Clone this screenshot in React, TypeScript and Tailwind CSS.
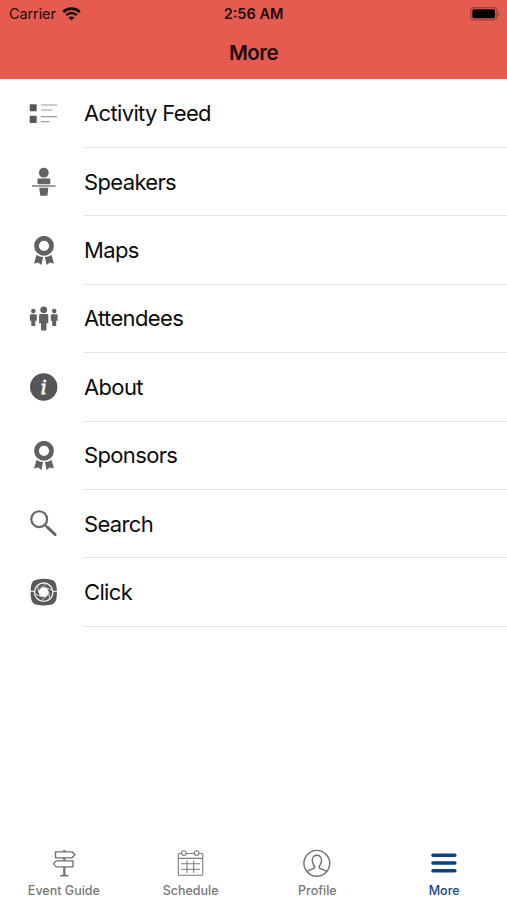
import React from "react";

interface MenuItem {
    label: string;
    icon: React.ReactNode;
}

interface TabItem extends MenuItem {
    active?: boolean;
}

const FeedIcon = () => (
    <svg width="30" height="30" viewBox="0 0 30 30" fill="#58585a">
        <rect x="0.7" y="5.2" width="7" height="7.1" rx="0.6" />
        <rect x="0.7" y="16.8" width="7" height="7.1" rx="0.6" />
        <path
            d="M12 6h16M12 11h11.5M12 17.600h16M12 22.600h8.500"
            stroke="#9a9a9c"
            strokeWidth="1.2"
        />
    </svg>
);

const SpeakerIcon = () => (
    <svg width="30" height="30" viewBox="0 0 30 30" fill="#636365">
        <circle cx="14.8" cy="5.7" r="4.9" />
        <rect x="8.5" y="11.4" width="12.8" height="5.8" rx="1" />
        <rect x="3" y="18.2" width="23.6" height="1.6" fill="#858587" />
        <path d="M10.2 20.8h9.2l-1.1 8h-7z" />
    </svg>
);

const RibbonIcon = () => (
    <svg width="30" height="30" viewBox="0 0 30 30" fill="#616163">
        <circle
            cx="15"
            cy="9.8"
            r="7.5"
            fill="none"
            stroke="#616163"
            strokeWidth="4.8"
        />
        <path d="M7.6 18.800c2 1.500 4 2.100 6.500 2.200l-1.700 8-3.200-2.600-4.200 1.100z" />
        <path d="M22.4 18.800c-2 1.500-4 2.100-6.500 2.200l1.700 8 3.200-2.600 4.200 1.100z" />
    </svg>
);

const AttendeesIcon = () => (
    <svg width="30" height="30" viewBox="0 0 30 30" fill="#616163">
        <circle cx="14.7" cy="5.8" r="3.4" />
        <path d="M11.3 10h6.800a1.200 1.200 0 0 1 1.200 1.200v8h-1.900v7.400h-5.400v-7.400h-1.900v-8a1.200 1.200 0 0 1 1.200-1.200z" />
        <circle cx="4.3" cy="7.1" r="2.3" />
        <path d="M2 10.200h4.800a1 1 0 0 1 1 1v5.500H6.300v5.200h-4v-5.200H.9v-5.500a1 1 0 0 1 1.100-1z" />
        <circle cx="25.2" cy="7.1" r="2.3" />
        <path d="M22.800 10.200h4.800a1 1 0 0 1 1 1v5.500h-1.400v5.200h-4v-5.200h-1.400v-5.500a1 1 0 0 1 1-1z" />
    </svg>
);

const InfoIcon = () => (
    <svg width="30" height="30" viewBox="0 0 30 30">
        <circle cx="14.7" cy="15" r="13.7" fill="#565658" />
        <text
            x="14.6"
            y="21.9"
            textAnchor="middle"
            fontFamily="'DejaVu Serif', serif"
            fontSize="18.5"
            fontStyle="italic"
            fill="#fff"
            stroke="#fff"
            strokeWidth="0.8"
        >
            i
        </text>
    </svg>
);

const SearchIcon = () => (
    <svg
        width="30"
        height="30"
        viewBox="0 0 30 30"
        fill="none"
        stroke="#646466"
        strokeLinecap="round"
    >
        <circle cx="10.2" cy="10.2" r="7.9" strokeWidth="2.1" />
        <path d="M16 16l3 3" strokeWidth="2" />
        <path d="M18.8 18.6l7.3 6.9" strokeWidth="3" />
    </svg>
);

const ShutterIcon = () => (
    <svg width="30" height="30" viewBox="0 0 30 30" fill="none">
        <path
            d="M8 1.6c4.500-1 9-1 13.500 0 3.200.700 5 2.300 5.700 5.400 1 4.800 1 9.600 0 14.400-.700 3.100-2.500 4.700-5.700 5.400-4.500 1-9 1-13.500 0-3.200-.700-5-2.300-5.700-5.400-1-4.800-1-9.600 0-14.400C3 3.900 4.800 2.300 8 1.600z"
            fill="#59595b"
        />
        <path d="M0 13.300h5.500M24 13.300h5.500" stroke="#fff" strokeWidth="1" />
        <circle cx="14.7" cy="14.2" r="9.2" stroke="#f0f0f0" strokeWidth="1.4" />
        <circle cx="14.7" cy="14.2" r="4.9" fill="#fff" />
        <g stroke="#e8e8e8" strokeWidth="0.8">
            {[0, 60, 120, 180, 240, 300].map((angle) => (
                <path
                    key={angle}
                    d="M11.7 10.200l5.300-4.100"
                    transform={`rotate(${angle} 14.7 14.2)`}
                />
            ))}
        </g>
    </svg>
);

const SignpostIcon = () => (
    <svg
        width="30"
        height="30"
        viewBox="0 0 30 30"
        fill="none"
        stroke="#6f6f6f"
        strokeWidth="1.3"
        strokeLinejoin="round"
    >
        <path d="M7.5 3.8h16.500l3 3-3 3H7.500z" />
        <path d="M25 12.900H8.300l-3 3 3 3H25z" />
        <path d="M16.300 2v1.800M16.300 9.800v3M16.300 19v8.500" strokeWidth="2.2" />
        <path d="M12.100 27.700h8.400" strokeWidth="1.5" />
    </svg>
);

const CalendarIcon = () => (
    <svg
        width="30"
        height="30"
        viewBox="0 0 30 30"
        fill="none"
        stroke="#7c7c7c"
        strokeWidth="1.1"
    >
        <path d="M6.500 5.500H4.200a.9.900 0 0 0-.900.900v20a.9.900 0 0 0 .900.900h22.700a.9.900 0 0 0 .900-.900v-20a.9.900 0 0 0-.900-.900h-2.700M11.300 5.500h8M3.300 10.400h24.500" />
        <circle cx="8.9" cy="5" r="2.3" />
        <circle cx="21.7" cy="5" r="2.3" />
        <path d="M12 12.500V25M18.700 12.500V25M6 15.700h19M6 21.300h19" />
    </svg>
);

const ProfileIcon = () => (
    <svg
        width="30"
        height="30"
        viewBox="0 0 30 30"
        fill="none"
        stroke="#6f6f6f"
        strokeWidth="1.4"
    >
        <circle cx="14.8" cy="15.3" r="12.9" />
        <path d="M5 23.700c1.200-1.200 3-1.800 5.200-2.500 1.900-.600 2.700-1.300 2.500-2.500-.200-1-1.600-1.800-2.100-4.200-.900-4.300.600-7.300 4.300-7.300s5.200 3 4.300 7.300c-.500 2.400-1.900 3.200-2.100 4.200-.200 1.200.600 1.900 2.500 2.500 2.200.700 4 1.300 5.200 2.500" />
    </svg>
);

const MoreIcon = () => (
    <svg
        width="30"
        height="30"
        viewBox="0 0 30 30"
        stroke="#0b4282"
        strokeWidth="3.4"
        strokeLinecap="round"
    >
        <path d="M3.9 7.300h22M3.900 15h22M3.900 22.700h22" />
    </svg>
);

const menuItems: MenuItem[] = [
    { label: "Activity Feed", icon: <FeedIcon /> },
    { label: "Speakers", icon: <SpeakerIcon /> },
    { label: "Maps", icon: <RibbonIcon /> },
    { label: "Attendees", icon: <AttendeesIcon /> },
    { label: "About", icon: <InfoIcon /> },
    { label: "Sponsors", icon: <RibbonIcon /> },
    { label: "Search", icon: <SearchIcon /> },
    { label: "Click", icon: <ShutterIcon /> },
];

const tabs: TabItem[] = [
    { label: "Event Guide", icon: <SignpostIcon /> },
    { label: "Schedule", icon: <CalendarIcon /> },
    { label: "Profile", icon: <ProfileIcon /> },
    { label: "More", icon: <MoreIcon />, active: true },
];

const StatusBar = () => (
    <div className="grid h-[27px] grid-cols-3 items-center px-[9px] text-[#210a08]">
        <div className="flex items-center gap-[6px]">
            <span className="pt-[2px] text-[14.5px] leading-none tracking-[-0.1px]">
                Carrier
            </span>
            <svg width="19" height="14" viewBox="0 0 19 14" fill="none" stroke="#160504">
                <path d="M1.2 4.900c4.700-4.500 11.900-4.500 16.600 0" strokeWidth="2.7" />
                <path d="M4.2 8.200c3-2.900 7.600-2.900 10.600 0" strokeWidth="2.5" />
                <path d="M9.5 13.400L6.600 10.600c1.600-1.500 4.200-1.500 5.800 0z" fill="#160504" stroke="none" />
            </svg>
        </div>
        <span className="pt-[2px] text-center text-[14.5px] leading-none font-semibold">
            2:56 AM
        </span>
        <svg
            className="translate-x-[2px] justify-self-end"
            width="31"
            height="14"
            viewBox="0 0 31 14"
        >
            <rect x="1.7" y="0.7" width="26" height="12.1" rx="3.5" fill="none" stroke="#9c3f38" strokeWidth="1.2" />
            <rect x="3.3" y="2.3" width="22.8" height="8.9" rx="1.8" fill="#000" />
            <path d="M29 4.800c1.700.700 1.700 3.400 0 4.100z" fill="#9c3f38" />
        </svg>
    </div>
);

const App: React.FC = () => {
    return (
        <div className="flex h-[900px] w-full flex-col overflow-hidden bg-white font-['Inter',sans-serif]">
            <header className="h-[79px] shrink-0 bg-[#e55b50]">
                <StatusBar />
                <h1 className="text-center text-[20.5px] leading-[51px] font-semibold tracking-[-0.5px] text-[#1c0504]">
                    More
                </h1>
            </header>

            <ul className="flex-1 pt-[0.6px]">
                {menuItems.map((item) => (
                    <li key={item.label} className="flex h-[68.4px] items-center pl-[29px]">
                        <span className="w-[55px] shrink-0">{item.icon}</span>
                        <span className="flex h-full flex-1 items-center border-b border-[#e4e4e5] pt-[1px] text-[22px] tracking-[-0.65px] text-[#0c0c0c]">
                            {item.label}
                        </span>
                    </li>
                ))}
            </ul>

            <nav className="grid h-[52px] shrink-0 grid-cols-4">
                {tabs.map((tab) => (
                    <div key={tab.label} className="flex flex-col items-center">
                        {tab.icon}
                        <span
                            className={`mt-[5px] pl-[1px] text-[12.5px] leading-[16px] font-medium ${
                                tab.active ? "text-[#14488a]" : "text-[#777777]"
                            }`}
                        >
                            {tab.label}
                        </span>
                    </div>
                ))}
            </nav>
        </div>
    );
};

export default App;
